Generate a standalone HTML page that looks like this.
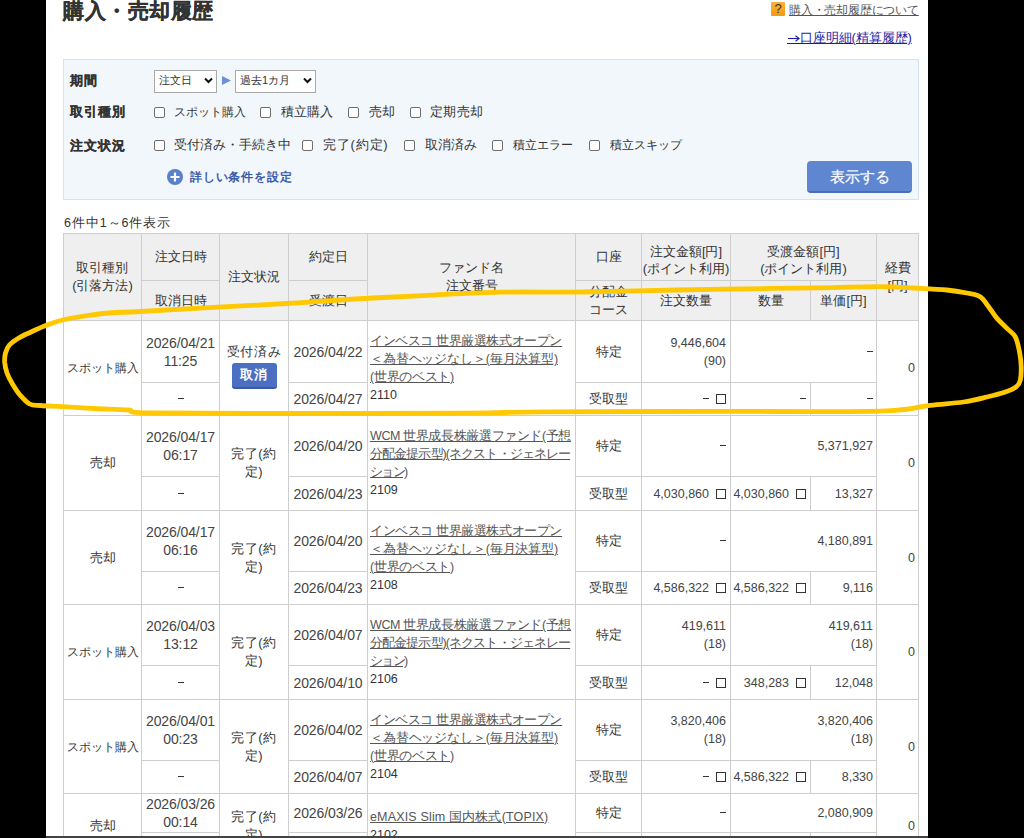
<!DOCTYPE html><html><head><meta charset="utf-8"><style>
html,body{margin:0;padding:0;}
body{width:1024px;height:838px;background:#000;position:relative;overflow:hidden;font-family:"Liberation Sans",sans-serif;color:#333;font-size:13px;}
#pg{position:absolute;left:46px;top:0;width:882px;height:838px;background:#fff;}
.c{position:absolute;display:flex;box-sizing:border-box;overflow:visible;line-height:18px;white-space:nowrap;}
.a{position:absolute;white-space:nowrap;}
.cb{position:absolute;width:11px;height:11px;border:1px solid #6e6e6e;border-radius:2px;background:#fff;box-sizing:border-box;}
u,.u{text-decoration:underline;}
.lk{color:#555;text-decoration:underline;text-underline-offset:1px;font-size:12.5px;}
.n{font-size:12.5px;color:#3a3a3a;}
.num{font-size:13.5px;}
</style></head><body><div id="pg"></div>

<div class="a" style="left:63px;top:-2px;font-size:20.5px;letter-spacing:0.5px;-webkit-text-stroke:0.35px #333;font-weight:bold;color:#333;line-height:26px;">購入・売却履歴</div>
<div class="a" style="left:771px;top:2px;width:14px;height:14px;background:linear-gradient(#f9b13a,#f29a12);border-radius:1px;font-size:13px;line-height:14px;text-align:center;color:#333;">?</div>
<div class="a lk" style="left:789px;top:2px;font-size:11.7px;letter-spacing:-0.2px;line-height:16px;color:#555;">購入・売却履歴について</div>
<svg class="a" style="left:788px;top:35px" width="12" height="7" viewBox="0 0 12 7"><path d="M0 3.5H10.5" stroke="#1c1ca6" stroke-width="1.1"/><path d="M7.5 0.8L11.2 3.5L7.5 6.2" stroke="#1c1ca6" stroke-width="1.1" fill="none"/></svg>
<div class="a" style="left:800px;top:30px;font-size:13px;letter-spacing:-0.1px;line-height:16px;color:#1c1ca6;text-decoration:underline;">口座明細(精算履歴)</div>
<div class="a" style="left:787px;top:43px;width:14px;height:1px;background:#1c1ca6;"></div>
<div class="a" style="left:63px;top:59px;width:854px;height:139px;background:#f2f7fc;border:1px solid #d3e3f3;"></div>
<div class="a" style="left:70px;top:72px;font-weight:bold;font-size:13px;letter-spacing:1px;line-height:18px;-webkit-text-stroke:0.2px #333;">期間</div>
<div class="a" style="left:70px;top:103px;font-weight:bold;font-size:13px;letter-spacing:1px;line-height:18px;-webkit-text-stroke:0.2px #333;">取引種別</div>
<div class="a" style="left:70px;top:137px;font-weight:bold;font-size:13px;letter-spacing:1px;line-height:18px;-webkit-text-stroke:0.2px #333;">注文状況</div>
<div class="a" style="left:154px;top:70px;width:63px;height:23px;box-sizing:border-box;border:1px solid #a9a9a9;background:#fff;"><span style="position:absolute;left:4px;top:1px;font-size:11px;line-height:16px;color:#333;">注文日</span><svg style="position:absolute;right:3px;top:6px" width="9" height="7" viewBox="0 0 9 7"><path d="M1 1.5 L4.5 5 L8 1.5" stroke="#111" stroke-width="2" fill="none"/></svg></div>
<svg class="a" style="left:222px;top:76px" width="9" height="9" viewBox="0 0 9 9"><path d="M0 0 L9 4.5 L0 9Z" fill="#6b8fd8"/></svg>
<div class="a" style="left:235px;top:70px;width:81px;height:23px;box-sizing:border-box;border:1px solid #a9a9a9;background:#fff;"><span style="position:absolute;left:4px;top:1px;font-size:11px;line-height:16px;color:#333;">過去1カ月</span><svg style="position:absolute;right:3px;top:6px" width="9" height="7" viewBox="0 0 9 7"><path d="M1 1.5 L4.5 5 L8 1.5" stroke="#111" stroke-width="2" fill="none"/></svg></div>
<div class="cb" style="left:154px;top:107px;"></div>
<div class="a" style="left:174px;top:104px;font-size:12px;letter-spacing:0px;line-height:16px;">スポット購入</div>
<div class="cb" style="left:260px;top:107px;"></div>
<div class="a" style="left:281px;top:104px;font-size:13px;letter-spacing:0px;line-height:16px;">積立購入</div>
<div class="cb" style="left:348px;top:107px;"></div>
<div class="a" style="left:369px;top:104px;font-size:13px;letter-spacing:0px;line-height:16px;">売却</div>
<div class="cb" style="left:410px;top:107px;"></div>
<div class="a" style="left:430px;top:104px;font-size:13px;letter-spacing:0.3px;line-height:16px;">定期売却</div>
<div class="cb" style="left:154px;top:140px;"></div>
<div class="a" style="left:174px;top:137px;font-size:12.5px;letter-spacing:0px;line-height:16px;">受付済み・手続き中</div>
<div class="cb" style="left:302px;top:140px;"></div>
<div class="a" style="left:323px;top:137px;font-size:13px;letter-spacing:0.8px;line-height:16px;">完了(約定)</div>
<div class="cb" style="left:404px;top:140px;"></div>
<div class="a" style="left:425px;top:137px;font-size:13px;letter-spacing:0px;line-height:16px;">取消済み</div>
<div class="cb" style="left:492px;top:140px;"></div>
<div class="a" style="left:513px;top:137px;font-size:12px;letter-spacing:0px;line-height:16px;">積立エラー</div>
<div class="cb" style="left:589px;top:140px;"></div>
<div class="a" style="left:610px;top:137px;font-size:12px;letter-spacing:0px;line-height:16px;">積立スキップ</div>
<svg class="a" style="left:167px;top:169px" width="16" height="16" viewBox="0 0 16 16"><circle cx="8" cy="8" r="8" fill="#5a7fcd"/><path d="M8 3.5V12.5M3.5 8H12.5" stroke="#fff" stroke-width="2.2"/></svg>
<div class="a" style="left:190px;top:168px;font-size:12px;letter-spacing:0.8px;line-height:18px;color:#3b5ba9;font-weight:bold;">詳しい条件を設定</div>
<div class="a" style="left:807px;top:161px;width:105px;height:32px;box-sizing:border-box;background:#5f86d0;border-bottom:2px solid #4a6db8;border-radius:4px;color:#fff;font-size:14.5px;line-height:33px;text-align:center;-webkit-text-stroke:0.25px #fff;">表示する</div>
<div class="a" style="left:64px;top:215px;font-size:12.5px;line-height:16px;letter-spacing:0.9px;">6件中1～6件表示</div>
<div style="position:absolute;left:63px;top:233px;width:855px;height:87px;background:#efefef"></div>
<div style="position:absolute;left:63px;top:233px;width:856px;height:1px;background:#cecece"></div>
<div style="position:absolute;left:63px;top:320px;width:856px;height:1px;background:#cecece"></div>
<div style="position:absolute;left:141px;top:280px;width:79px;height:1px;background:#cecece"></div>
<div style="position:absolute;left:288px;top:280px;width:80px;height:1px;background:#cecece"></div>
<div style="position:absolute;left:575px;top:280px;width:67px;height:1px;background:#cecece"></div>
<div style="position:absolute;left:641px;top:280px;width:90px;height:1px;background:#cecece"></div>
<div style="position:absolute;left:730px;top:280px;width:147px;height:1px;background:#cecece"></div>
<div style="position:absolute;left:63px;top:233px;width:1px;height:88px;background:#cecece"></div>
<div style="position:absolute;left:141px;top:233px;width:1px;height:88px;background:#cecece"></div>
<div style="position:absolute;left:219px;top:233px;width:1px;height:88px;background:#cecece"></div>
<div style="position:absolute;left:288px;top:233px;width:1px;height:88px;background:#cecece"></div>
<div style="position:absolute;left:367px;top:233px;width:1px;height:88px;background:#cecece"></div>
<div style="position:absolute;left:575px;top:233px;width:1px;height:88px;background:#cecece"></div>
<div style="position:absolute;left:641px;top:233px;width:1px;height:88px;background:#cecece"></div>
<div style="position:absolute;left:730px;top:233px;width:1px;height:88px;background:#cecece"></div>
<div style="position:absolute;left:876px;top:233px;width:1px;height:88px;background:#cecece"></div>
<div style="position:absolute;left:918px;top:233px;width:1px;height:88px;background:#cecece"></div>
<div style="position:absolute;left:810px;top:280px;width:1px;height:41px;background:#cecece"></div>
<div class="c" style="left:64px;top:234px;width:77px;height:86px;justify-content:center;align-items:center;text-align:center;padding:0 3px;"><div>取引種別<br>(引落方法)</div></div>
<div class="c" style="left:142px;top:234px;width:77px;height:46px;justify-content:center;align-items:center;text-align:center;padding:0 3px;"><div>注文日時</div></div>
<div class="c" style="left:142px;top:281px;width:77px;height:39px;justify-content:center;align-items:center;text-align:center;padding:0 3px;"><div>取消日時</div></div>
<div class="c" style="left:220px;top:234px;width:68px;height:86px;justify-content:center;align-items:center;text-align:center;padding:0 3px;"><div>注文状況</div></div>
<div class="c" style="left:289px;top:234px;width:78px;height:46px;justify-content:center;align-items:center;text-align:center;padding:0 3px;"><div>約定日</div></div>
<div class="c" style="left:289px;top:281px;width:78px;height:39px;justify-content:center;align-items:center;text-align:center;padding:0 3px;"><div>受渡日</div></div>
<div class="c" style="left:368px;top:234px;width:207px;height:86px;justify-content:center;align-items:center;text-align:center;padding:0 3px;"><div>ファンド名<br>注文番号</div></div>
<div class="c" style="left:576px;top:234px;width:65px;height:46px;justify-content:center;align-items:center;text-align:center;padding:0 3px;"><div>口座</div></div>
<div class="c" style="left:576px;top:281px;width:65px;height:39px;justify-content:center;align-items:center;text-align:center;padding:0 3px;"><div>分配金<br>コース</div></div>
<div class="c" style="left:642px;top:234px;width:88px;height:46px;justify-content:center;align-items:center;text-align:center;padding:0 0px;"><div><div style="position:relative;top:3px;line-height:17px">注文金額[円]<br>(ポイント利用)</div></div></div>
<div class="c" style="left:642px;top:281px;width:88px;height:39px;justify-content:center;align-items:center;text-align:center;padding:0 3px;"><div>注文数量</div></div>
<div class="c" style="left:731px;top:234px;width:145px;height:46px;justify-content:center;align-items:center;text-align:center;padding:0 3px;"><div><div style="position:relative;top:3px;line-height:17px">受渡金額[円]<br>(ポイント利用)</div></div></div>
<div class="c" style="left:731px;top:281px;width:79px;height:39px;justify-content:center;align-items:center;text-align:center;padding:0 3px;"><div>数量</div></div>
<div class="c" style="left:811px;top:281px;width:65px;height:39px;justify-content:center;align-items:center;text-align:center;padding:0 0px;"><div>単価[円]</div></div>
<div class="c" style="left:877px;top:234px;width:41px;height:86px;justify-content:center;align-items:center;text-align:center;padding:0 3px;"><div>経費<br>[円]</div></div>
<div style="position:absolute;left:63px;top:415px;width:856px;height:1px;background:#cecece"></div>
<div style="position:absolute;left:141px;top:382px;width:79px;height:1px;background:#cecece"></div>
<div style="position:absolute;left:288px;top:382px;width:80px;height:1px;background:#cecece"></div>
<div style="position:absolute;left:575px;top:382px;width:302px;height:1px;background:#cecece"></div>
<div style="position:absolute;left:63px;top:320px;width:1px;height:96px;background:#cecece"></div>
<div style="position:absolute;left:141px;top:320px;width:1px;height:96px;background:#cecece"></div>
<div style="position:absolute;left:219px;top:320px;width:1px;height:96px;background:#cecece"></div>
<div style="position:absolute;left:288px;top:320px;width:1px;height:96px;background:#cecece"></div>
<div style="position:absolute;left:367px;top:320px;width:1px;height:96px;background:#cecece"></div>
<div style="position:absolute;left:575px;top:320px;width:1px;height:96px;background:#cecece"></div>
<div style="position:absolute;left:641px;top:320px;width:1px;height:96px;background:#cecece"></div>
<div style="position:absolute;left:730px;top:320px;width:1px;height:96px;background:#cecece"></div>
<div style="position:absolute;left:876px;top:320px;width:1px;height:96px;background:#cecece"></div>
<div style="position:absolute;left:918px;top:320px;width:1px;height:96px;background:#cecece"></div>
<div style="position:absolute;left:810px;top:382px;width:1px;height:34px;background:#cecece"></div>
<div class="c" style="left:64px;top:321px;width:77px;height:94px;justify-content:center;align-items:center;text-align:center;padding:0 0px;font-size:12.2px"><div>スポット購入</div></div>
<div class="c" style="left:142px;top:321px;width:77px;height:61px;justify-content:center;align-items:center;text-align:center;padding:0 0px;font-size:14px;letter-spacing:-0.1px;color:#444"><div>2026/04/21<br>11:25</div></div>
<div class="c" style="left:142px;top:383px;width:77px;height:32px;justify-content:center;align-items:center;text-align:center;padding:0 3px;"><div><span style="display:inline-block;width:6px;height:1px;background:#333;vertical-align:4px"></span></div></div>
<div class="c" style="left:220px;top:321px;width:68px;height:94px;justify-content:center;align-items:center;text-align:center;padding:0 0px;letter-spacing:0.6px"><div><div style="position:relative;top:-2px">受付済み<br><span style="display:inline-block;margin-top:2px;width:45px;height:26px;box-sizing:border-box;background:#4b6fc1;border-bottom:2px solid #3a5aa5;border-radius:3px;color:#fff;font-weight:bold;font-size:13px;line-height:24px;text-align:center;">取消</span></div></div></div>
<div class="c" style="left:289px;top:321px;width:78px;height:61px;justify-content:center;align-items:center;text-align:center;padding:0 0px;font-size:14px;letter-spacing:-0.1px;color:#444"><div>2026/04/22</div></div>
<div class="c" style="left:289px;top:383px;width:78px;height:32px;justify-content:center;align-items:center;text-align:center;padding:0 0px;font-size:14px;letter-spacing:-0.1px;color:#444"><div>2026/04/27</div></div>
<div class="c" style="left:368px;top:321px;width:207px;height:94px;justify-content:flex-start;align-items:center;text-align:left;padding:0 2px;font-size:12.5px"><div><span class="lk" style="letter-spacing:-0.4px">インベスコ 世界厳選株式オープン</span><br><span class="lk" style="letter-spacing:-0.15px">＜為替ヘッジなし＞(毎月決算型)</span><br><span class="lk" style="letter-spacing:-0.3px">(世界のベスト)</span><br>2110</div></div>
<div class="c" style="left:576px;top:321px;width:65px;height:61px;justify-content:center;align-items:center;text-align:center;padding:0 3px;"><div>特定</div></div>
<div class="c" style="left:576px;top:383px;width:65px;height:32px;justify-content:center;align-items:center;text-align:center;padding:0 3px;"><div>受取型</div></div>
<div class="c" style="left:642px;top:321px;width:88px;height:61px;justify-content:flex-end;align-items:center;text-align:right;padding:0 4px;font-size:12.5px;color:#444"><div>9,446,604<br>(90)</div></div>
<div class="c" style="left:642px;top:383px;width:88px;height:32px;justify-content:flex-end;align-items:center;text-align:right;padding:0 4px;font-size:12.5px;color:#444"><div><span style="display:inline-block;width:6px;height:1px;background:#333;vertical-align:4px"></span><span style="display:inline-block;width:10px;height:10px;border:1px solid #333;box-sizing:border-box;margin-left:7px;vertical-align:-1px"></span></div></div>
<div class="c" style="left:731px;top:321px;width:145px;height:61px;justify-content:flex-end;align-items:center;text-align:right;padding:0 3px;font-size:12.5px;color:#444"><div><span style="display:inline-block;width:6px;height:1px;background:#333;vertical-align:4px"></span></div></div>
<div class="c" style="left:731px;top:383px;width:79px;height:32px;justify-content:flex-end;align-items:center;text-align:right;padding:0 4px;font-size:12.5px;color:#444"><div><span style="display:inline-block;width:6px;height:1px;background:#333;vertical-align:4px"></span></div></div>
<div class="c" style="left:811px;top:383px;width:65px;height:32px;justify-content:flex-end;align-items:center;text-align:right;padding:0 3px;font-size:12.5px;color:#444"><div><span style="display:inline-block;width:6px;height:1px;background:#333;vertical-align:4px"></span></div></div>
<div class="c" style="left:877px;top:321px;width:41px;height:94px;justify-content:flex-end;align-items:center;text-align:right;padding:0 3px;font-size:12.5px;color:#444"><div>0</div></div>
<div style="position:absolute;left:63px;top:510px;width:856px;height:1px;background:#cecece"></div>
<div style="position:absolute;left:141px;top:476px;width:79px;height:1px;background:#cecece"></div>
<div style="position:absolute;left:288px;top:476px;width:80px;height:1px;background:#cecece"></div>
<div style="position:absolute;left:575px;top:476px;width:302px;height:1px;background:#cecece"></div>
<div style="position:absolute;left:63px;top:415px;width:1px;height:96px;background:#cecece"></div>
<div style="position:absolute;left:141px;top:415px;width:1px;height:96px;background:#cecece"></div>
<div style="position:absolute;left:219px;top:415px;width:1px;height:96px;background:#cecece"></div>
<div style="position:absolute;left:288px;top:415px;width:1px;height:96px;background:#cecece"></div>
<div style="position:absolute;left:367px;top:415px;width:1px;height:96px;background:#cecece"></div>
<div style="position:absolute;left:575px;top:415px;width:1px;height:96px;background:#cecece"></div>
<div style="position:absolute;left:641px;top:415px;width:1px;height:96px;background:#cecece"></div>
<div style="position:absolute;left:730px;top:415px;width:1px;height:96px;background:#cecece"></div>
<div style="position:absolute;left:876px;top:415px;width:1px;height:96px;background:#cecece"></div>
<div style="position:absolute;left:918px;top:415px;width:1px;height:96px;background:#cecece"></div>
<div style="position:absolute;left:810px;top:476px;width:1px;height:35px;background:#cecece"></div>
<div class="c" style="left:64px;top:416px;width:77px;height:94px;justify-content:center;align-items:center;text-align:center;padding:0 0px;font-size:13px"><div>売却</div></div>
<div class="c" style="left:142px;top:416px;width:77px;height:60px;justify-content:center;align-items:center;text-align:center;padding:0 0px;font-size:14px;letter-spacing:-0.1px;color:#444"><div>2026/04/17<br>06:17</div></div>
<div class="c" style="left:142px;top:477px;width:77px;height:33px;justify-content:center;align-items:center;text-align:center;padding:0 3px;"><div><span style="display:inline-block;width:6px;height:1px;background:#333;vertical-align:4px"></span></div></div>
<div class="c" style="left:220px;top:416px;width:68px;height:94px;justify-content:center;align-items:center;text-align:center;padding:0 0px;letter-spacing:0.6px"><div>完了(約<br>定)</div></div>
<div class="c" style="left:289px;top:416px;width:78px;height:60px;justify-content:center;align-items:center;text-align:center;padding:0 0px;font-size:14px;letter-spacing:-0.1px;color:#444"><div>2026/04/20</div></div>
<div class="c" style="left:289px;top:477px;width:78px;height:33px;justify-content:center;align-items:center;text-align:center;padding:0 0px;font-size:14px;letter-spacing:-0.1px;color:#444"><div>2026/04/23</div></div>
<div class="c" style="left:368px;top:416px;width:207px;height:94px;justify-content:flex-start;align-items:center;text-align:left;padding:0 2px;font-size:12.5px"><div><span class="lk" style="letter-spacing:-0.38px">WCM 世界成長株厳選ファンド(予想</span><br><span class="lk" style="letter-spacing:-0.9px">分配金提示型)(ネクスト・ジェネレー</span><br><span class="lk" style="letter-spacing:-1.7px">ション)</span><br>2109</div></div>
<div class="c" style="left:576px;top:416px;width:65px;height:60px;justify-content:center;align-items:center;text-align:center;padding:0 3px;"><div>特定</div></div>
<div class="c" style="left:576px;top:477px;width:65px;height:33px;justify-content:center;align-items:center;text-align:center;padding:0 3px;"><div>受取型</div></div>
<div class="c" style="left:642px;top:416px;width:88px;height:60px;justify-content:flex-end;align-items:center;text-align:right;padding:0 4px;font-size:12.5px;color:#444"><div><span style="display:inline-block;width:6px;height:1px;background:#333;vertical-align:4px"></span></div></div>
<div class="c" style="left:642px;top:477px;width:88px;height:33px;justify-content:flex-end;align-items:center;text-align:right;padding:0 4px;font-size:12.5px;color:#444"><div>4,030,860<span style="display:inline-block;width:10px;height:10px;border:1px solid #333;box-sizing:border-box;margin-left:7px;vertical-align:-1px"></span></div></div>
<div class="c" style="left:731px;top:416px;width:145px;height:60px;justify-content:flex-end;align-items:center;text-align:right;padding:0 3px;font-size:12.5px;color:#444"><div>5,371,927</div></div>
<div class="c" style="left:731px;top:477px;width:79px;height:33px;justify-content:flex-end;align-items:center;text-align:right;padding:0 4px;font-size:12.5px;color:#444"><div>4,030,860<span style="display:inline-block;width:10px;height:10px;border:1px solid #333;box-sizing:border-box;margin-left:7px;vertical-align:-1px"></span></div></div>
<div class="c" style="left:811px;top:477px;width:65px;height:33px;justify-content:flex-end;align-items:center;text-align:right;padding:0 3px;font-size:12.5px;color:#444"><div>13,327</div></div>
<div class="c" style="left:877px;top:416px;width:41px;height:94px;justify-content:flex-end;align-items:center;text-align:right;padding:0 3px;font-size:12.5px;color:#444"><div>0</div></div>
<div style="position:absolute;left:63px;top:604px;width:856px;height:1px;background:#cecece"></div>
<div style="position:absolute;left:141px;top:571px;width:79px;height:1px;background:#cecece"></div>
<div style="position:absolute;left:288px;top:571px;width:80px;height:1px;background:#cecece"></div>
<div style="position:absolute;left:575px;top:571px;width:302px;height:1px;background:#cecece"></div>
<div style="position:absolute;left:63px;top:510px;width:1px;height:95px;background:#cecece"></div>
<div style="position:absolute;left:141px;top:510px;width:1px;height:95px;background:#cecece"></div>
<div style="position:absolute;left:219px;top:510px;width:1px;height:95px;background:#cecece"></div>
<div style="position:absolute;left:288px;top:510px;width:1px;height:95px;background:#cecece"></div>
<div style="position:absolute;left:367px;top:510px;width:1px;height:95px;background:#cecece"></div>
<div style="position:absolute;left:575px;top:510px;width:1px;height:95px;background:#cecece"></div>
<div style="position:absolute;left:641px;top:510px;width:1px;height:95px;background:#cecece"></div>
<div style="position:absolute;left:730px;top:510px;width:1px;height:95px;background:#cecece"></div>
<div style="position:absolute;left:876px;top:510px;width:1px;height:95px;background:#cecece"></div>
<div style="position:absolute;left:918px;top:510px;width:1px;height:95px;background:#cecece"></div>
<div style="position:absolute;left:810px;top:571px;width:1px;height:34px;background:#cecece"></div>
<div class="c" style="left:64px;top:511px;width:77px;height:93px;justify-content:center;align-items:center;text-align:center;padding:0 0px;font-size:13px"><div>売却</div></div>
<div class="c" style="left:142px;top:511px;width:77px;height:60px;justify-content:center;align-items:center;text-align:center;padding:0 0px;font-size:14px;letter-spacing:-0.1px;color:#444"><div>2026/04/17<br>06:16</div></div>
<div class="c" style="left:142px;top:572px;width:77px;height:32px;justify-content:center;align-items:center;text-align:center;padding:0 3px;"><div><span style="display:inline-block;width:6px;height:1px;background:#333;vertical-align:4px"></span></div></div>
<div class="c" style="left:220px;top:511px;width:68px;height:93px;justify-content:center;align-items:center;text-align:center;padding:0 0px;letter-spacing:0.6px"><div>完了(約<br>定)</div></div>
<div class="c" style="left:289px;top:511px;width:78px;height:60px;justify-content:center;align-items:center;text-align:center;padding:0 0px;font-size:14px;letter-spacing:-0.1px;color:#444"><div>2026/04/20</div></div>
<div class="c" style="left:289px;top:572px;width:78px;height:32px;justify-content:center;align-items:center;text-align:center;padding:0 0px;font-size:14px;letter-spacing:-0.1px;color:#444"><div>2026/04/23</div></div>
<div class="c" style="left:368px;top:511px;width:207px;height:93px;justify-content:flex-start;align-items:center;text-align:left;padding:0 2px;font-size:12.5px"><div><span class="lk" style="letter-spacing:-0.4px">インベスコ 世界厳選株式オープン</span><br><span class="lk" style="letter-spacing:-0.15px">＜為替ヘッジなし＞(毎月決算型)</span><br><span class="lk" style="letter-spacing:-0.3px">(世界のベスト)</span><br>2108</div></div>
<div class="c" style="left:576px;top:511px;width:65px;height:60px;justify-content:center;align-items:center;text-align:center;padding:0 3px;"><div>特定</div></div>
<div class="c" style="left:576px;top:572px;width:65px;height:32px;justify-content:center;align-items:center;text-align:center;padding:0 3px;"><div>受取型</div></div>
<div class="c" style="left:642px;top:511px;width:88px;height:60px;justify-content:flex-end;align-items:center;text-align:right;padding:0 4px;font-size:12.5px;color:#444"><div><span style="display:inline-block;width:6px;height:1px;background:#333;vertical-align:4px"></span></div></div>
<div class="c" style="left:642px;top:572px;width:88px;height:32px;justify-content:flex-end;align-items:center;text-align:right;padding:0 4px;font-size:12.5px;color:#444"><div>4,586,322<span style="display:inline-block;width:10px;height:10px;border:1px solid #333;box-sizing:border-box;margin-left:7px;vertical-align:-1px"></span></div></div>
<div class="c" style="left:731px;top:511px;width:145px;height:60px;justify-content:flex-end;align-items:center;text-align:right;padding:0 3px;font-size:12.5px;color:#444"><div>4,180,891</div></div>
<div class="c" style="left:731px;top:572px;width:79px;height:32px;justify-content:flex-end;align-items:center;text-align:right;padding:0 4px;font-size:12.5px;color:#444"><div>4,586,322<span style="display:inline-block;width:10px;height:10px;border:1px solid #333;box-sizing:border-box;margin-left:7px;vertical-align:-1px"></span></div></div>
<div class="c" style="left:811px;top:572px;width:65px;height:32px;justify-content:flex-end;align-items:center;text-align:right;padding:0 3px;font-size:12.5px;color:#444"><div>9,116</div></div>
<div class="c" style="left:877px;top:511px;width:41px;height:93px;justify-content:flex-end;align-items:center;text-align:right;padding:0 3px;font-size:12.5px;color:#444"><div>0</div></div>
<div style="position:absolute;left:63px;top:699px;width:856px;height:1px;background:#cecece"></div>
<div style="position:absolute;left:141px;top:665px;width:79px;height:1px;background:#cecece"></div>
<div style="position:absolute;left:288px;top:665px;width:80px;height:1px;background:#cecece"></div>
<div style="position:absolute;left:575px;top:665px;width:302px;height:1px;background:#cecece"></div>
<div style="position:absolute;left:63px;top:604px;width:1px;height:96px;background:#cecece"></div>
<div style="position:absolute;left:141px;top:604px;width:1px;height:96px;background:#cecece"></div>
<div style="position:absolute;left:219px;top:604px;width:1px;height:96px;background:#cecece"></div>
<div style="position:absolute;left:288px;top:604px;width:1px;height:96px;background:#cecece"></div>
<div style="position:absolute;left:367px;top:604px;width:1px;height:96px;background:#cecece"></div>
<div style="position:absolute;left:575px;top:604px;width:1px;height:96px;background:#cecece"></div>
<div style="position:absolute;left:641px;top:604px;width:1px;height:96px;background:#cecece"></div>
<div style="position:absolute;left:730px;top:604px;width:1px;height:96px;background:#cecece"></div>
<div style="position:absolute;left:876px;top:604px;width:1px;height:96px;background:#cecece"></div>
<div style="position:absolute;left:918px;top:604px;width:1px;height:96px;background:#cecece"></div>
<div style="position:absolute;left:810px;top:665px;width:1px;height:35px;background:#cecece"></div>
<div class="c" style="left:64px;top:605px;width:77px;height:94px;justify-content:center;align-items:center;text-align:center;padding:0 0px;font-size:12.2px"><div>スポット購入</div></div>
<div class="c" style="left:142px;top:605px;width:77px;height:60px;justify-content:center;align-items:center;text-align:center;padding:0 0px;font-size:14px;letter-spacing:-0.1px;color:#444"><div>2026/04/03<br>13:12</div></div>
<div class="c" style="left:142px;top:666px;width:77px;height:33px;justify-content:center;align-items:center;text-align:center;padding:0 3px;"><div><span style="display:inline-block;width:6px;height:1px;background:#333;vertical-align:4px"></span></div></div>
<div class="c" style="left:220px;top:605px;width:68px;height:94px;justify-content:center;align-items:center;text-align:center;padding:0 0px;letter-spacing:0.6px"><div>完了(約<br>定)</div></div>
<div class="c" style="left:289px;top:605px;width:78px;height:60px;justify-content:center;align-items:center;text-align:center;padding:0 0px;font-size:14px;letter-spacing:-0.1px;color:#444"><div>2026/04/07</div></div>
<div class="c" style="left:289px;top:666px;width:78px;height:33px;justify-content:center;align-items:center;text-align:center;padding:0 0px;font-size:14px;letter-spacing:-0.1px;color:#444"><div>2026/04/10</div></div>
<div class="c" style="left:368px;top:605px;width:207px;height:94px;justify-content:flex-start;align-items:center;text-align:left;padding:0 2px;font-size:12.5px"><div><span class="lk" style="letter-spacing:-0.38px">WCM 世界成長株厳選ファンド(予想</span><br><span class="lk" style="letter-spacing:-0.9px">分配金提示型)(ネクスト・ジェネレー</span><br><span class="lk" style="letter-spacing:-1.7px">ション)</span><br>2106</div></div>
<div class="c" style="left:576px;top:605px;width:65px;height:60px;justify-content:center;align-items:center;text-align:center;padding:0 3px;"><div>特定</div></div>
<div class="c" style="left:576px;top:666px;width:65px;height:33px;justify-content:center;align-items:center;text-align:center;padding:0 3px;"><div>受取型</div></div>
<div class="c" style="left:642px;top:605px;width:88px;height:60px;justify-content:flex-end;align-items:center;text-align:right;padding:0 4px;font-size:12.5px;color:#444"><div>419,611<br>(18)</div></div>
<div class="c" style="left:642px;top:666px;width:88px;height:33px;justify-content:flex-end;align-items:center;text-align:right;padding:0 4px;font-size:12.5px;color:#444"><div><span style="display:inline-block;width:6px;height:1px;background:#333;vertical-align:4px"></span><span style="display:inline-block;width:10px;height:10px;border:1px solid #333;box-sizing:border-box;margin-left:7px;vertical-align:-1px"></span></div></div>
<div class="c" style="left:731px;top:605px;width:145px;height:60px;justify-content:flex-end;align-items:center;text-align:right;padding:0 3px;font-size:12.5px;color:#444"><div>419,611<br>(18)</div></div>
<div class="c" style="left:731px;top:666px;width:79px;height:33px;justify-content:flex-end;align-items:center;text-align:right;padding:0 4px;font-size:12.5px;color:#444"><div>348,283<span style="display:inline-block;width:10px;height:10px;border:1px solid #333;box-sizing:border-box;margin-left:7px;vertical-align:-1px"></span></div></div>
<div class="c" style="left:811px;top:666px;width:65px;height:33px;justify-content:flex-end;align-items:center;text-align:right;padding:0 3px;font-size:12.5px;color:#444"><div>12,048</div></div>
<div class="c" style="left:877px;top:605px;width:41px;height:94px;justify-content:flex-end;align-items:center;text-align:right;padding:0 3px;font-size:12.5px;color:#444"><div>0</div></div>
<div style="position:absolute;left:63px;top:793px;width:856px;height:1px;background:#cecece"></div>
<div style="position:absolute;left:141px;top:760px;width:79px;height:1px;background:#cecece"></div>
<div style="position:absolute;left:288px;top:760px;width:80px;height:1px;background:#cecece"></div>
<div style="position:absolute;left:575px;top:760px;width:302px;height:1px;background:#cecece"></div>
<div style="position:absolute;left:63px;top:699px;width:1px;height:95px;background:#cecece"></div>
<div style="position:absolute;left:141px;top:699px;width:1px;height:95px;background:#cecece"></div>
<div style="position:absolute;left:219px;top:699px;width:1px;height:95px;background:#cecece"></div>
<div style="position:absolute;left:288px;top:699px;width:1px;height:95px;background:#cecece"></div>
<div style="position:absolute;left:367px;top:699px;width:1px;height:95px;background:#cecece"></div>
<div style="position:absolute;left:575px;top:699px;width:1px;height:95px;background:#cecece"></div>
<div style="position:absolute;left:641px;top:699px;width:1px;height:95px;background:#cecece"></div>
<div style="position:absolute;left:730px;top:699px;width:1px;height:95px;background:#cecece"></div>
<div style="position:absolute;left:876px;top:699px;width:1px;height:95px;background:#cecece"></div>
<div style="position:absolute;left:918px;top:699px;width:1px;height:95px;background:#cecece"></div>
<div style="position:absolute;left:810px;top:760px;width:1px;height:34px;background:#cecece"></div>
<div class="c" style="left:64px;top:700px;width:77px;height:93px;justify-content:center;align-items:center;text-align:center;padding:0 0px;font-size:12.2px"><div>スポット購入</div></div>
<div class="c" style="left:142px;top:700px;width:77px;height:60px;justify-content:center;align-items:center;text-align:center;padding:0 0px;font-size:14px;letter-spacing:-0.1px;color:#444"><div>2026/04/01<br>00:23</div></div>
<div class="c" style="left:142px;top:761px;width:77px;height:32px;justify-content:center;align-items:center;text-align:center;padding:0 3px;"><div><span style="display:inline-block;width:6px;height:1px;background:#333;vertical-align:4px"></span></div></div>
<div class="c" style="left:220px;top:700px;width:68px;height:93px;justify-content:center;align-items:center;text-align:center;padding:0 0px;letter-spacing:0.6px"><div>完了(約<br>定)</div></div>
<div class="c" style="left:289px;top:700px;width:78px;height:60px;justify-content:center;align-items:center;text-align:center;padding:0 0px;font-size:14px;letter-spacing:-0.1px;color:#444"><div>2026/04/02</div></div>
<div class="c" style="left:289px;top:761px;width:78px;height:32px;justify-content:center;align-items:center;text-align:center;padding:0 0px;font-size:14px;letter-spacing:-0.1px;color:#444"><div>2026/04/07</div></div>
<div class="c" style="left:368px;top:700px;width:207px;height:93px;justify-content:flex-start;align-items:center;text-align:left;padding:0 2px;font-size:12.5px"><div><span class="lk" style="letter-spacing:-0.4px">インベスコ 世界厳選株式オープン</span><br><span class="lk" style="letter-spacing:-0.15px">＜為替ヘッジなし＞(毎月決算型)</span><br><span class="lk" style="letter-spacing:-0.3px">(世界のベスト)</span><br>2104</div></div>
<div class="c" style="left:576px;top:700px;width:65px;height:60px;justify-content:center;align-items:center;text-align:center;padding:0 3px;"><div>特定</div></div>
<div class="c" style="left:576px;top:761px;width:65px;height:32px;justify-content:center;align-items:center;text-align:center;padding:0 3px;"><div>受取型</div></div>
<div class="c" style="left:642px;top:700px;width:88px;height:60px;justify-content:flex-end;align-items:center;text-align:right;padding:0 4px;font-size:12.5px;color:#444"><div>3,820,406<br>(18)</div></div>
<div class="c" style="left:642px;top:761px;width:88px;height:32px;justify-content:flex-end;align-items:center;text-align:right;padding:0 4px;font-size:12.5px;color:#444"><div><span style="display:inline-block;width:6px;height:1px;background:#333;vertical-align:4px"></span><span style="display:inline-block;width:10px;height:10px;border:1px solid #333;box-sizing:border-box;margin-left:7px;vertical-align:-1px"></span></div></div>
<div class="c" style="left:731px;top:700px;width:145px;height:60px;justify-content:flex-end;align-items:center;text-align:right;padding:0 3px;font-size:12.5px;color:#444"><div>3,820,406<br>(18)</div></div>
<div class="c" style="left:731px;top:761px;width:79px;height:32px;justify-content:flex-end;align-items:center;text-align:right;padding:0 4px;font-size:12.5px;color:#444"><div>4,586,322<span style="display:inline-block;width:10px;height:10px;border:1px solid #333;box-sizing:border-box;margin-left:7px;vertical-align:-1px"></span></div></div>
<div class="c" style="left:811px;top:761px;width:65px;height:32px;justify-content:flex-end;align-items:center;text-align:right;padding:0 3px;font-size:12.5px;color:#444"><div>8,330</div></div>
<div class="c" style="left:877px;top:700px;width:41px;height:93px;justify-content:flex-end;align-items:center;text-align:right;padding:0 3px;font-size:12.5px;color:#444"><div>0</div></div>
<div style="position:absolute;left:63px;top:857px;width:856px;height:1px;background:#cecece"></div>
<div style="position:absolute;left:141px;top:832px;width:79px;height:1px;background:#cecece"></div>
<div style="position:absolute;left:288px;top:832px;width:80px;height:1px;background:#cecece"></div>
<div style="position:absolute;left:575px;top:832px;width:302px;height:1px;background:#cecece"></div>
<div style="position:absolute;left:63px;top:793px;width:1px;height:65px;background:#cecece"></div>
<div style="position:absolute;left:141px;top:793px;width:1px;height:65px;background:#cecece"></div>
<div style="position:absolute;left:219px;top:793px;width:1px;height:65px;background:#cecece"></div>
<div style="position:absolute;left:288px;top:793px;width:1px;height:65px;background:#cecece"></div>
<div style="position:absolute;left:367px;top:793px;width:1px;height:65px;background:#cecece"></div>
<div style="position:absolute;left:575px;top:793px;width:1px;height:65px;background:#cecece"></div>
<div style="position:absolute;left:641px;top:793px;width:1px;height:65px;background:#cecece"></div>
<div style="position:absolute;left:730px;top:793px;width:1px;height:65px;background:#cecece"></div>
<div style="position:absolute;left:876px;top:793px;width:1px;height:65px;background:#cecece"></div>
<div style="position:absolute;left:918px;top:793px;width:1px;height:65px;background:#cecece"></div>
<div style="position:absolute;left:810px;top:832px;width:1px;height:26px;background:#cecece"></div>
<div class="c" style="left:64px;top:794px;width:77px;height:63px;justify-content:center;align-items:center;text-align:center;padding:0 0px;font-size:13px"><div>売却</div></div>
<div class="c" style="left:142px;top:794px;width:77px;height:38px;justify-content:center;align-items:center;text-align:center;padding:0 0px;font-size:14px;letter-spacing:-0.1px;color:#444"><div>2026/03/26<br>00:14</div></div>
<div class="c" style="left:142px;top:833px;width:77px;height:24px;justify-content:center;align-items:center;text-align:center;padding:0 3px;"><div><span style="display:inline-block;width:6px;height:1px;background:#333;vertical-align:4px"></span></div></div>
<div class="c" style="left:220px;top:794px;width:68px;height:63px;justify-content:center;align-items:center;text-align:center;padding:0 0px;letter-spacing:0.6px"><div>完了(約<br>定)</div></div>
<div class="c" style="left:289px;top:794px;width:78px;height:38px;justify-content:center;align-items:center;text-align:center;padding:0 0px;font-size:14px;letter-spacing:-0.1px;color:#444"><div>2026/03/26</div></div>
<div class="c" style="left:289px;top:833px;width:78px;height:24px;justify-content:center;align-items:center;text-align:center;padding:0 0px;font-size:14px;letter-spacing:-0.1px;color:#444"><div></div></div>
<div class="c" style="left:368px;top:794px;width:207px;height:63px;justify-content:flex-start;align-items:center;text-align:left;padding:0 2px;font-size:12.5px"><div><span class="lk" style="letter-spacing:0.16px">eMAXIS Slim 国内株式(TOPIX)</span><br>2102</div></div>
<div class="c" style="left:576px;top:794px;width:65px;height:38px;justify-content:center;align-items:center;text-align:center;padding:0 3px;"><div>特定</div></div>
<div class="c" style="left:576px;top:833px;width:65px;height:24px;justify-content:center;align-items:center;text-align:center;padding:0 3px;"><div>受取型</div></div>
<div class="c" style="left:642px;top:794px;width:88px;height:38px;justify-content:flex-end;align-items:center;text-align:right;padding:0 4px;font-size:12.5px;color:#444"><div><span style="display:inline-block;width:6px;height:1px;background:#333;vertical-align:4px"></span></div></div>
<div class="c" style="left:642px;top:833px;width:88px;height:24px;justify-content:flex-end;align-items:center;text-align:right;padding:0 4px;font-size:12.5px;color:#444"><div></div></div>
<div class="c" style="left:731px;top:794px;width:145px;height:38px;justify-content:flex-end;align-items:center;text-align:right;padding:0 3px;font-size:12.5px;color:#444"><div>2,080,909</div></div>
<div class="c" style="left:731px;top:833px;width:79px;height:24px;justify-content:flex-end;align-items:center;text-align:right;padding:0 4px;font-size:12.5px;color:#444"><div></div></div>
<div class="c" style="left:811px;top:833px;width:65px;height:24px;justify-content:flex-end;align-items:center;text-align:right;padding:0 3px;font-size:12.5px;color:#444"><div></div></div>
<div class="c" style="left:877px;top:794px;width:41px;height:63px;justify-content:flex-end;align-items:center;text-align:right;padding:0 3px;font-size:12.5px;color:#444"><div>0</div></div>
<div class="a" style="left:46px;top:836px;width:882px;height:2px;background:#444;"></div>
<svg class="a" style="left:0;top:0" width="1024" height="838" viewBox="0 0 1024 838">
<path d="M4.7 362.5 C4.5 359.2 4.7 355.9 5.5 353.0 C6.3 350.1 7.2 347.5 9.4 345.0 C11.6 342.5 15.2 340.2 18.8 338.0 C22.4 335.8 26.3 334.2 31.0 332.0 C35.7 329.8 41.8 327.0 47.0 325.0 C52.2 323.0 57.3 321.3 62.5 320.0 C67.7 318.7 70.2 318.2 78.0 317.0 C85.8 315.8 98.6 313.9 109.0 313.0 C119.4 312.1 122.4 312.5 140.6 311.5 C158.8 310.5 193.7 308.5 218.0 307.2 C242.3 305.9 263.9 304.9 286.7 303.5 C309.5 302.1 332.3 300.3 355.0 299.0 C377.7 297.7 398.8 296.7 423.0 295.6 C447.2 294.5 473.2 292.8 500.0 292.2 C526.8 291.6 554.2 292.4 583.8 292.0 C613.4 291.6 650.2 290.5 677.5 290.0 C704.8 289.5 724.4 289.2 747.8 288.8 C771.2 288.4 796.0 288.2 818.0 287.8 C840.0 287.4 864.1 286.7 880.0 286.7 C895.9 286.7 902.3 287.4 913.4 288.0 C924.5 288.6 937.9 289.2 946.8 290.0 C955.7 290.8 961.3 291.9 966.9 293.0 C972.5 294.1 976.6 294.4 980.2 296.7 C983.8 299.0 985.8 303.1 988.6 306.7 C991.4 310.3 993.9 314.8 997.0 318.4 C1000.1 322.0 1004.0 325.3 1007.0 328.4 C1010.0 331.5 1013.2 332.9 1015.3 336.8 C1017.4 340.7 1018.5 346.8 1019.5 351.8 C1020.5 356.8 1021.1 362.2 1021.2 366.9 C1021.3 371.6 1021.1 376.9 1020.3 380.2 C1019.5 383.5 1018.7 384.9 1016.2 386.9 C1013.7 388.9 1010.2 390.3 1005.3 392.0 C1000.4 393.7 993.9 395.3 986.9 397.0 C979.9 398.7 973.0 400.6 963.5 402.0 C954.0 403.4 943.9 403.8 930.0 405.3 C916.1 406.8 916.3 410.1 880.0 411.1 C843.7 412.1 767.8 411.3 712.0 411.4 C656.2 411.5 585.3 411.5 545.0 411.8 C504.7 412.1 509.2 412.9 470.0 413.2 C430.8 413.5 363.3 413.5 310.0 413.5 C256.7 413.5 180.3 413.6 150.0 413.0 C119.7 412.4 137.3 410.8 128.0 410.0 C118.7 409.2 104.9 409.1 94.0 408.5 C83.1 407.9 71.4 407.2 62.5 406.7 C53.6 406.2 46.1 405.9 40.6 405.5 C35.1 405.1 33.1 405.8 29.7 404.0 C26.3 402.2 22.9 398.3 20.0 395.0 C17.1 391.7 14.7 387.7 12.5 384.0 C10.3 380.3 8.3 376.6 7.0 373.0 C5.7 369.4 5.0 365.8 4.7 362.5Z" fill="none" stroke="#ffc800" stroke-width="4.8" stroke-linejoin="round"/>
</svg>
</body></html>
